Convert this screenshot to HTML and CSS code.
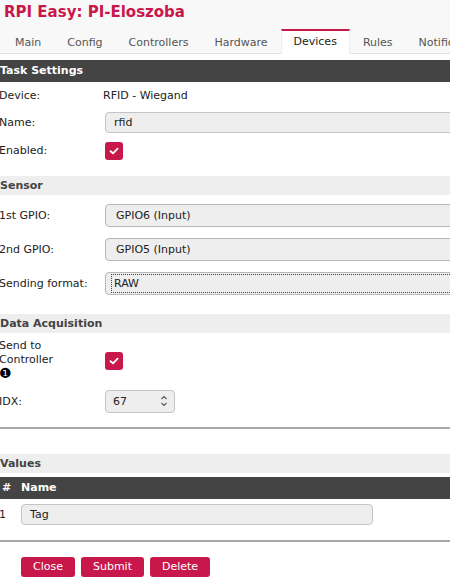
FILE: index.html
```html
<!DOCTYPE html>
<html>
<head>
<meta charset="utf-8">
<link rel="stylesheet" href="styles.css">
</head>
<body>
<div class="top">
  <h1 class="title">RPI Easy: PI-Eloszoba</h1>
  <nav class="tabs">
    <span class="tab">Main</span>
    <span class="tab">Config</span>
    <span class="tab">Controllers</span>
    <span class="tab">Hardware</span>
    <span class="tab active">Devices</span>
    <span class="tab">Rules</span>
    <span class="tab">Notifications</span>
  </nav>
</div>
<div class="content">
  <div class="bar dark">Task Settings</div>
  <div class="row r26"><span class="lbl">Device:</span><span class="val">RFID - Wiegand</span></div>
  <div class="row r27"><span class="lbl">Name:</span><div class="field wide">rfid</div></div>
  <div class="row r28"><span class="lbl">Enabled:</span><span class="check"><svg width="10" height="8" viewBox="0 0 10 8"><path d="M1.5 4.2 L4 6.3 L8.6 1.6" fill="none" stroke="#fff" stroke-width="1.8" stroke-linecap="round" stroke-linejoin="round"/></svg></span></div>

  <div class="bar light mt11">Sensor</div>
  <div class="row r34 first"><span class="lbl">1st GPIO:</span><div class="field sel wide">GPIO6 (Input)</div></div>
  <div class="row r34"><span class="lbl">2nd GPIO:</span><div class="field sel wide">GPIO5 (Input)</div></div>
  <div class="row r34"><span class="lbl">Sending format:</span><div class="field sel wide focus"><span class="dots">RAW</span></div></div>

  <div class="bar light mt14">Data Acquisition</div>
  <div class="row r52"><span class="lbl multi">Send to<br>Controller<br><span class="info">❶</span></span><span class="check low"><svg width="10" height="8" viewBox="0 0 10 8"><path d="M1.5 4.2 L4 6.3 L8.6 1.6" fill="none" stroke="#fff" stroke-width="1.8" stroke-linecap="round" stroke-linejoin="round"/></svg></span></div>
  <div class="row r36"><span class="lbl">IDX:</span><div class="field num">67<svg class="spin" width="8" height="14" viewBox="0 0 8 14"><path d="M1.5 5 L4 2.5 L6.5 5 M1.5 9 L4 11.5 L6.5 9" fill="none" stroke="#555" stroke-width="1.1"/></svg></div></div>
  <div class="sep"></div>

  <div class="bar light mt25">Values</div>
  <div class="bar dark vals"><span class="hash">#</span><span>Name</span></div>
  <div class="vrow"><span class="idx">1</span><div class="field tag">Tag</div></div>
  <div class="sep s2"></div>
  <div class="buttons">
    <span class="btn">Close</span>
    <span class="btn">Submit</span>
    <span class="btn">Delete</span>
  </div>
</div>
</body>
</html>
```
FILE: styles.css
```css
html, body {
  margin: 0;
  padding: 0;
  overflow: hidden;
  background: #fff;
}
body {
  width: 450px;
  height: 578px;
  font-family: "DejaVu Sans", Verdana, sans-serif;
  font-size: 11px;
  color: #222;
}
.top {
  background: #f8f8f8;
  padding: 3px 0 0 0;
  border-bottom: 1px solid #e2e2e2;
}
.title {
  margin: 0 0 0 4px;
  font-size: 15px;
  line-height: 19px;
  font-weight: bold;
  color: #c8184b;
}
.tabs {
  display: flex;
  margin-top: 7px;
  margin-left: 2px;
  height: 24px;
  white-space: nowrap;
}
.tab {
  padding: 0 13px;
  line-height: 24px;
  color: #555;
  border-top: 2px solid transparent;
  box-sizing: border-box;
  height: 25px;
  margin-bottom: -1px;
}
.tab.active {
  background: #fff;
  border-top: 2px solid #c8184b;
  color: #222;
  line-height: 22px;
  border-left: 1px solid #eee;
  border-right: 1px solid #eee;
  padding: 0 12px;
}
.content {
  margin-top: 6px;
  margin-left: -2px;
  width: 460px;
}
.bar {
  font-weight: bold;
  padding-left: 2px;
}
.bar.dark {
  background: #444;
  color: #fff;
  height: 22px;
  line-height: 22px;
}
.bar.light {
  background: #eee;
  color: #444;
  height: 19px;
  line-height: 19px;
}
.mt11 { margin-top: 11px; }
.mt14 { margin-top: 14px; }
.mt25 { margin-top: 25px; }
.row {
  display: flex;
  align-items: center;
}
.r26 { height: 27px; }
.r27 { height: 27px; }
.r28 { height: 29px; }
.r34 { height: 34px; }
.row.first { margin-top: 3px; }
.r52 { height: 50px; }
.r36 { height: 36px; }
.lbl {
  width: 105px;
  flex: none;
  padding-left: 1px;
  box-sizing: border-box;
}
.lbl.multi {
  line-height: 14px;
  padding-top: 4px;
}
.info {
  font-size: 14px;
  line-height: 13px;
  color: #000;
}
.field {
  box-sizing: border-box;
  height: 21px;
  line-height: 19px;
  border: 1px solid #c4c4c4;
  border-radius: 4px;
  background: #eee;
  padding-left: 8px;
  color: #222;
  margin-left: 2px;
}
.field.wide {
  width: 360px;
  flex: none;
}
.field.sel {
  height: 23px;
  line-height: 21px;
  border-color: #b8b8b8;
  padding-left: 10px;
}
.field.focus {
  padding: 1px 0 1px 5px;
}
.dots {
  display: block;
  border: 1px dotted #444;
  border-right: none;
  height: 19px;
  line-height: 17px;
  padding-left: 2px;
  box-sizing: border-box;
}
.check {
  margin-left: 2px;
  width: 18px;
  height: 18px;
  border-radius: 3px;
  background: #c8184b;
  display: flex;
  align-items: center;
  justify-content: center;
}
.check.low {
  margin-top: 6px;
}
.field.num {
  width: 70px;
  height: 23px;
  line-height: 21px;
  padding-left: 7px;
  display: flex;
  align-items: center;
  justify-content: space-between;
  padding-right: 6px;
}
.spin { display: block; }
.sep {
  border-top: 2px solid #a8a8a8;
  margin-top: 8px;
}
.vals {
  margin-top: 4px;
  display: flex;
}
.hash {
  width: 19px;
  padding-left: 2px;
}
.vrow {
  display: flex;
  align-items: center;
  height: 40px;
  margin-top: -5px;
  margin-bottom: 6px;
}
.idx {
  width: 21px;
  padding-left: 1px;
  box-sizing: border-box;
}
.field.tag {
  width: 352px;
  height: 21px;
  margin-left: 2px;
}
.sep.s2 {
  margin-top: 0;
}
.buttons {
  display: flex;
  gap: 6px;
  margin-top: 15px;
  margin-left: 23px;
}
.btn {
  background: #c8184b;
  color: #fff;
  border-radius: 3px;
  height: 20px;
  line-height: 20px;
  padding: 0 12px;
  font-size: 11px;
}
```
